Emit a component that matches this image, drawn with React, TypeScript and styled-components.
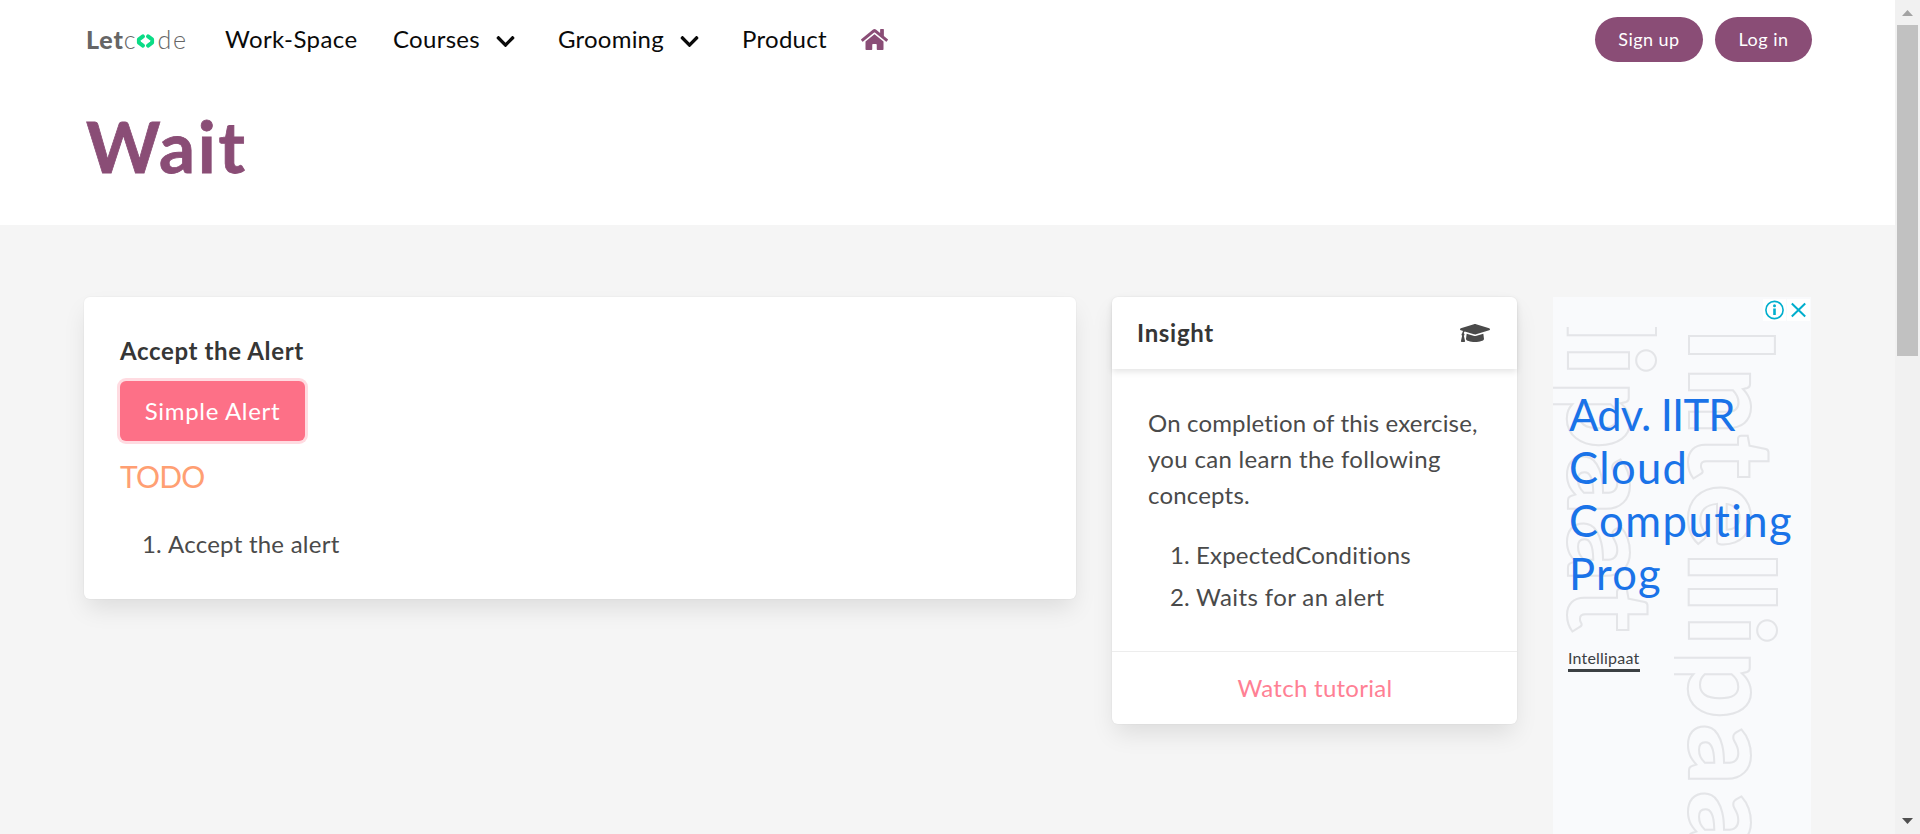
import React from 'react';
import styled, { createGlobalStyle } from 'styled-components';
import { FaChevronDown, FaHome, FaGraduationCap } from 'react-icons/fa';

const GlobalStyle = createGlobalStyle`
  * { box-sizing: border-box; }
  body {
    margin: 0;
    background: #f5f5f5;
    color: #4a4a4a;
    font: 400 24px/36px Lato, "Open Sans", sans-serif;
    overflow: hidden;
  }
`;

const Window = styled.div`
  display: flex;
  width: 1920px;
  height: 834px;
  overflow: hidden;
`;

const Page = styled.div`
  width: 1895px;
  height: 834px;
  overflow: hidden;
`;

/* Text run with its own tracking */
const Text = styled.span<{ $track?: number }>`
  letter-spacing: ${(p) => p.$track ?? 0}px;
  white-space: nowrap;
`;

const Top = styled.header`
  height: 225px;
  background: #fff;
`;

const Navbar = styled.nav`
  display: flex;
  align-items: center;
  height: 78px;
  padding: 0 83px 0 86px;
  color: #0a0a0a;
`;

const Logo = styled.a`
  display: flex;
  align-items: baseline;
  width: 139px;
  height: 36px;
  font-size: 25px;
  font-weight: 300;
  color: #666;
  b { font-weight: 900; letter-spacing: 0.8px; }
  svg { margin: 0 2px 0 1px; align-self: center; position: relative; top: 2px; }
`;

const NavLink = styled.a<{ $width: number }>`
  display: flex;
  align-items: center;
  width: ${(p) => p.$width}px;
  svg { margin-left: 15px; margin-top: 4px; }
`;

const Home = styled.a`
  display: flex;
  color: #8a4d76;
`;

const Actions = styled.div`
  display: flex;
  gap: 12px;
  margin-left: auto;
`;

const Pill = styled.button<{ $width: number }>`
  width: ${(p) => p.$width}px;
  height: 45px;
  padding: 0;
  border: 0;
  border-radius: 23px;
  background: #8a4d76;
  color: #fff;
  font: 400 18px/27px Lato, sans-serif;
`;

const Title = styled.h1`
  margin: 27px 0 0 86px;
  color: #8a4d76;
  font-size: 71px;
  font-weight: 700;
  line-height: 81px;
  -webkit-text-stroke: 0.8px #8a4d76;
`;

const Main = styled.main`
  display: flex;
  align-items: flex-start;
  padding: 72px 84px 0;
`;

const Card = styled.section<{ $width: number; $height: number }>`
  width: ${(p) => p.$width}px;
  height: ${(p) => p.$height}px;
  margin-right: 36px;
  border-radius: 6px;
  background: #fff;
  box-shadow: 0 12px 24px -3px rgba(10, 10, 10, 0.1), 0 0 0 1px rgba(10, 10, 10, 0.02);
`;

const Exercise = styled.div`
  display: flex;
  flex-direction: column;
  align-items: flex-start;
  padding: 36px 36px 0;
`;

const Label = styled.label`
  color: #363636;
  font-weight: 700;
`;

const AlertButton = styled.button`
  width: 185px;
  height: 60px;
  margin: 12px 0 13px;
  padding: 0 0 1px;
  border: 0;
  border-radius: 6px;
  background: #fd7087;
  box-shadow: 0 0 0 3px #ffdbe1;
  color: #fff;
  font: 400 24px/36px Lato, sans-serif;
`;

const Todo = styled.h2`
  margin: 0;
  color: #ff9f73;
  font-size: 30px;
  font-weight: 400;
  line-height: 45px;
`;

const Steps = styled.ol<{ $top: number }>`
  display: flex;
  flex-direction: column;
  gap: 6px;
  margin: ${(p) => p.$top}px 0 0 22px;
  padding: 0;
  list-style: none;
`;

const Step = styled.li`
  display: flex;
`;

const StepNumber = styled.span`
  width: 26px;
`;

const CardHeader = styled.div`
  display: flex;
  align-items: center;
  justify-content: space-between;
  height: 72px;
  padding: 0 27px 0 25px;
  border-radius: 6px 6px 0 0;
  box-shadow: 0 3px 6px rgba(10, 10, 10, 0.1);
  color: #363636;
  font-weight: 700;
  svg { color: #4a4a4a; }
`;

const CardBody = styled.div`
  height: 282px;
  padding: 36px 36px 0;
`;

const Line = styled.div`
  height: 36px;
`;

const CardFooter = styled.a`
  display: flex;
  justify-content: center;
  height: 73px;
  padding: 18px 0 0 1px;
  border-top: 1px solid #ededed;
  color: #ff8094;
`;

const Ad = styled.aside`
  position: relative;
  width: 258px;
  height: 600px;
  overflow: hidden;
  background: #f9fafc;
`;

const Strips = styled.div`
  position: absolute;
  inset: 30px 0 0;
  display: flex;
`;

const Strip = styled.div<{ $shift: number }>`
  flex: none;
  width: 121px;
  height: 507px;
  overflow: hidden;
  > div { margin-top: ${(p) => p.$shift}px; }
`;

const Glyph = styled.div<{ $height: number; $gap: number }>`
  display: flex;
  align-items: center;
  height: ${(p) => p.$height}px;
  margin-bottom: ${(p) => p.$gap}px;
  width: 121px;
  font: 900 119px/121px Lato, sans-serif;
  color: transparent;
  -webkit-text-stroke: 2px #e4e5e8;
  > span { writing-mode: vertical-rl; }
`;

const AdCopy = styled.div`
  position: relative;
  padding: 91px 0 0 16px;
  color: #1a73e8;
  font-size: 43.5px;
  line-height: 53px;
`;

const Advertiser = styled.div`
  position: relative;
  width: 72px;
  height: 30px;
  margin: 42px 0 0 15px;
  border-bottom: 3px solid #3c4043;
  color: #3c4043;
  font-size: 16px;
  line-height: 32px;
`;

const AdChoices = styled.div`
  position: absolute;
  top: 2px;
  right: 1px;
  display: flex;
  gap: 1px;
  svg { background: #fff; }
`;

const Scrollbar = styled.div`
  display: flex;
  flex-direction: column;
  align-items: center;
  width: 25px;
  height: 834px;
  padding: 10px 0 10px;
  background: #f1f1f1;
`;

const Thumb = styled.div`
  width: 21px;
  height: 331px;
  margin: 9px 0 auto;
  background: #c1c1c1;
`;

/* character, extent along the strip, gap before the next one */
const letters: [string, number, number][] = [
  ['I', 17, 17], ['n', 59, 5], ['t', 43, 6], ['e', 63, 11], ['l', 18, 13], ['l', 17, 16],
  ['i', 17, 14], ['p', 64, 8], ['a', 58, 9], ['a', 58, 8], ['t', 42, 0],
];

const Watermark = ({ from, to, shift }: { from: number; to: number; shift: number }) => (
  <Strip $shift={shift}>
    <div>
      {letters.slice(from, to).map(([char, height, gap], i) => (
        <Glyph key={i} $height={height} $gap={gap}><span>{char}</span></Glyph>
      ))}
    </div>
  </Strip>
);

const adLines: [string, number][] = [
  ['Adv. IITR', -0.8], ['Cloud', 1.3], ['Computing', 1.5], ['Prog', 1.3],
];

const insightLines: [string, number][] = [
  ['On completion of this exercise,', 0.16],
  ['you can learn the following', 0.31],
  ['concepts.', 0.19],
];

export default function App() {
  return (
    <Window>
      <GlobalStyle />
      <Page>
        <Top>
          <Navbar>
            <Logo>
              <b>Let</b>c
              <svg width="19" height="14" viewBox="0 0 18 14" fill="none" stroke="#0bdc86" strokeWidth="4" strokeLinecap="round" strokeLinejoin="round">
                <path d="M6.4 2.4 2.4 5.4v3.2l4 3M11.6 2.4l4 3v3.2l-4 3" />
              </svg>
              <Text $track={1.7}>de</Text>
            </Logo>
            <NavLink $width={168}><Text $track={0.4}>Work-Space</Text></NavLink>
            <NavLink $width={165}><Text $track={0.3}>Courses</Text><FaChevronDown size={21} /></NavLink>
            <NavLink $width={184}><Text $track={0.22}>Grooming</Text><FaChevronDown size={21} /></NavLink>
            <NavLink $width={119}><Text $track={0.28}>Product</Text></NavLink>
            <Home><FaHome size={27} /></Home>
            <Actions>
              <Pill $width={108}><Text $track={0.45}>Sign up</Text></Pill>
              <Pill $width={97}><Text $track={0.5}>Log in</Text></Pill>
            </Actions>
          </Navbar>
          <Title><Text $track={2.7}>Wait</Text></Title>
        </Top>
        <Main>
          <Card $width={992} $height={302}>
            <Exercise>
              <Label><Text $track={0.63}>Accept the Alert</Text></Label>
              <AlertButton><Text $track={0.67}>Simple Alert</Text></AlertButton>
              <Todo><Text $track={-0.8}>TODO</Text></Todo>
              <Steps $top={27}>
                <Step><StepNumber>1.</StepNumber><Text $track={0.25}>Accept the alert</Text></Step>
              </Steps>
            </Exercise>
          </Card>
          <Card $width={405} $height={427}>
            <CardHeader>
              <Text $track={0.7}>Insight</Text>
              <FaGraduationCap size={30} />
            </CardHeader>
            <CardBody>
              {insightLines.map(([line, track]) => (
                <Line key={line}><Text $track={track}>{line}</Text></Line>
              ))}
              <Steps $top={24}>
                <Step><StepNumber>1.</StepNumber><Text $track={0.18}>ExpectedConditions</Text></Step>
                <Step><StepNumber>2.</StepNumber><Text $track={0.4}>Waits for an alert</Text></Step>
              </Steps>
            </CardBody>
            <CardFooter><Text $track={0.28}>Watch tutorial</Text></CardFooter>
          </Card>
          <Ad>
            <Strips>
              <Watermark from={5} to={11} shift={-8} />
              <Watermark from={0} to={10} shift={10} />
            </Strips>
            <AdCopy>
              {adLines.map(([line, track]) => (
                <div key={line}><Text $track={track}>{line}</Text></div>
              ))}
            </AdCopy>
            <Advertiser><Text $track={0.2}>Intellipaat</Text></Advertiser>
            <AdChoices>
              <svg width="23" height="22" viewBox="0 0 23 22" fill="none" stroke="#00aecd">
                <circle cx="11.5" cy="11" r="8.6" strokeWidth="1.6" />
                <path d="M11.5 9.5v6.5" strokeWidth="2.6" />
                <circle cx="11.5" cy="6.8" r="1.5" fill="#00aecd" stroke="none" />
              </svg>
              <svg width="23" height="22" viewBox="0 0 23 22" fill="none" stroke="#00aecd" strokeWidth="2">
                <path d="M4.8 4.5 18.2 17.5M18.2 4.5 4.8 17.5" />
              </svg>
            </AdChoices>
          </Ad>
        </Main>
      </Page>
      <Scrollbar>
        <svg width="11" height="6" viewBox="0 0 11 6"><path d="M0 6 5.5 0 11 6z" fill="#a3a3a3" /></svg>
        <Thumb />
        <svg width="11" height="6" viewBox="0 0 11 6"><path d="M0 0h11L5.5 6z" fill="#505050" /></svg>
      </Scrollbar>
    </Window>
  );
}
